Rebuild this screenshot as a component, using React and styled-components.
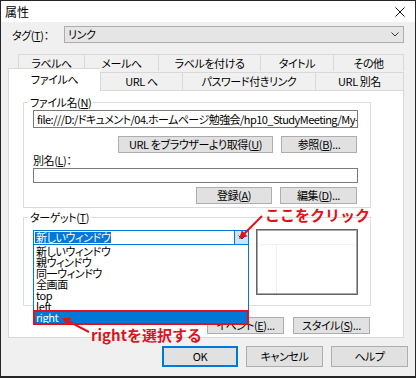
import React from "react";
import styled, { createGlobalStyle } from "styled-components";

const RED = "#e0121b";
const BLUE = "#0078d7";

const backTabs = [
  { label: "ラベルへ", w: 66 },
  { label: "メールへ", w: 74 },
  { label: "ラベルを付ける", w: 102 },
  { label: "タイトル", w: 73 },
  { label: "その他", w: 71 },
];

const frontTabs = [
  { label: "ファイルへ", w: 92, active: true },
  { label: "URL へ", w: 82 },
  { label: "パスワード付きリンク", w: 133 },
  { label: "URL 別名", w: 89 },
];

const targets = ["新しいウィンドウ", "親ウィンドウ", "同一ウィンドウ", "全画面", "top", "left", "right"];

function Chevron() {
  return (
    <svg width="8" height="5" viewBox="0 0 8 5">
      <polyline points="0.5,0.5 4,4 7.5,0.5" fill="none" stroke="#333" strokeWidth="1" />
    </svg>
  );
}

function App() {
  return (
    <>
      <GlobalStyle />
      <Window>
        <TitleBar>
          <span>属性</span>
          <svg width="10" height="10" viewBox="0 0 10 10">
            <path d="M0.5 0.5 L9.5 9.5 M9.5 0.5 L0.5 9.5" stroke="#111" strokeWidth="1" />
          </svg>
        </TitleBar>

        <Body>
          <TagRow>
            <FieldLabel $w={52}>
              タグ(<u>T</u>)：
            </FieldLabel>
            <Combo>
              <span>リンク</span>
              <Chevron />
            </Combo>
          </TagRow>

          <Tabs>
            <BackRow>
              {backTabs.map((t) => (
                <Tab key={t.label} $w={t.w}>
                  {t.label}
                </Tab>
              ))}
            </BackRow>
            <FrontRow>
              {frontTabs.map((t) => (
                <Tab key={t.label} $w={t.w} $active={t.active} $front>
                  {t.label}
                </Tab>
              ))}
            </FrontRow>

            <Panel>
              <Group>
                <Legend>
                  ファイル名(<u>N</u>)
                </Legend>
                <TextBox $h={18} $tight>
                  file:///D:/ドキュメント/04.ホームページ勉強会/hp10_StudyMeeting/My-Homepage/index.html
                </TextBox>
                <ButtonRow $top={8}>
                  <Button $w={155}>
                    URL をブラウザーより取得(<u>U</u>)
                  </Button>
                  <Button $w={76}>
                    参照(<u>B</u>)...
                  </Button>
                </ButtonRow>
                <FieldLabel>
                  別名(<u>L</u>)：
                </FieldLabel>
                <TextBox $h={15} $top={1} />
                <ButtonRow $top={4}>
                  <Button $w={76}>
                    登録(<u>A</u>)
                  </Button>
                  <Button $w={77}>
                    編集(<u>D</u>)...
                  </Button>
                </ButtonRow>
              </Group>

              <Group $top={2} $bottom={10}>
                <Legend>
                  ターゲット(<u>T</u>)
                </Legend>
                <TargetGrid>
                  <ComboWrap>
                    <FocusCombo>
                      <Selected>新しいウィンドウ</Selected>
                      <DropButton>
                        <Chevron />
                      </DropButton>
                    </FocusCombo>
                    <DropList>
                      {targets.map((t) => (
                        <DropItem key={t} $hl={t === "right"}>
                          {t}
                        </DropItem>
                      ))}
                    </DropList>
                  </ComboWrap>
                  <ListBox>
                    <ListHead />
                    <ListCol />
                  </ListBox>
                </TargetGrid>
              </Group>

              <ButtonRow $top={11} $gap={9} $right={1}>
                <Button $w={77}>
                  イベント(<u>E</u>)...
                </Button>
                <Button $w={77}>
                  スタイル(<u>S</u>)...
                </Button>
              </ButtonRow>
            </Panel>
          </Tabs>

          <Footer>
            <Button $w={76} $h={21} $default>
              OK
            </Button>
            <Button $w={77} $h={21}>
              キャンセル
            </Button>
            <Button $w={77} $h={21}>
              ヘルプ
            </Button>
          </Footer>
        </Body>

        <Overlay>
          <Note style={{ left: 265, top: 206 }}>ここをクリック</Note>
          <Note style={{ left: 91, top: 326 }}>rightを選択する</Note>
          <svg width="416" height="378" viewBox="0 0 416 378">
            <line x1="262" y1="216" x2="244.5" y2="233.5" stroke={RED} strokeWidth="2" />
            <polygon points="239,239 247.5,236.2 241.8,230.5" fill={RED} />
            <line x1="89" y1="332" x2="69" y2="321.7" stroke={RED} strokeWidth="2" />
            <polygon points="62,318 70.9,318.1 67.3,325.2" fill={RED} />
          </svg>
        </Overlay>
      </Window>
    </>
  );
}

const GlobalStyle = createGlobalStyle`
  * {
    box-sizing: border-box;
  }
  html, body {
    margin: 0;
    padding: 0;
    background: #f0f0f0;
  }
  body {
    font-family: "Noto Sans CJK JP", "Noto Sans", sans-serif;
    font-size: 11px;
    letter-spacing: -0.4px;
    font-feature-settings: "palt";
    color: #000;
  }
  u {
    text-decoration-thickness: 1px;
    text-underline-offset: 1px;
  }
`;

const Window = styled.div`
  position: relative;
  width: 416px;
  height: 378px;
  border: 1px solid #262626;
  border-bottom-width: 2px;
  background: #f0f0f0;
  display: flex;
  flex-direction: column;
  overflow: hidden;
`;

const TitleBar = styled.div`
  height: 21px;
  background: #fff;
  display: flex;
  align-items: center;
  justify-content: space-between;
  padding: 0 10px 0 4px;
  font-size: 12px;
  letter-spacing: 0;
`;

const Body = styled.div`
  display: flex;
  flex-direction: column;
  padding: 0 11px 0 7px;
`;

const TagRow = styled.div`
  display: flex;
  align-items: center;
  height: 17px;
  margin-top: 4px;
  padding-left: 4px;
`;

const FieldLabel = styled.div`
  width: ${({ $w }) => ($w ? `${$w}px` : "auto")};
  line-height: 14px;
  white-space: nowrap;
`;

const Combo = styled.div`
  flex: 1;
  height: 17px;
  border: 1px solid #adadad;
  background: #e5e5e5;
  display: flex;
  align-items: center;
  justify-content: space-between;
  padding: 0 4px 0 3px;
  line-height: 15px;
`;

const Tabs = styled.div`
  display: flex;
  flex-direction: column;
  margin-top: 11px;
`;

const BackRow = styled.div`
  display: flex;
  height: 17px;
  padding-left: 10px;
`;

const FrontRow = styled.div`
  display: flex;
  height: 19px;
  position: relative;
  z-index: 1;
`;

const Tab = styled.div`
  width: ${({ $w }) => $w}px;
  height: ${({ $front, $active }) => ($active ? 23 : $front ? 18 : 17)}px;
  margin-top: ${({ $front, $active }) => ($active ? -3 : $front ? 1 : 0)}px;
  background: ${({ $active }) => ($active ? "#fff" : "#f0f0f0")};
  border: 1px solid #d9d9d9;
  border-bottom: none;
  border-right: none;
  text-align: center;
  line-height: ${({ $active }) => ($active ? 20 : 16)}px;
  white-space: nowrap;

  &:last-child {
    border-right: 1px solid #d9d9d9;
  }
`;

const Panel = styled.div`
  height: 248px;
  background: #fff;
  border: 1px solid #d9d9d9;
  display: flex;
  flex-direction: column;
  padding: 4px 0 0 14px;
`;

const Group = styled.fieldset`
  width: 348px;
  margin: ${({ $top }) => $top || 0}px 0 0 0;
  border: 1px solid #dcdcdc;
  padding: 1px 12px ${({ $bottom }) => $bottom ?? 3}px 9px;
  min-width: 0;
`;

const Legend = styled.legend`
  padding: 0 2px;
  margin-left: -5px;
  line-height: 14px;
`;

const TextBox = styled.div`
  height: ${({ $h }) => $h}px;
  margin-top: ${({ $top }) => $top || 0}px;
  border: 1px solid #7a7a7a;
  background: #fff;
  padding: 0 3px;
  line-height: ${({ $h }) => $h - 2}px;
  letter-spacing: ${({ $tight }) => ($tight ? "-0.55px" : "inherit")};
  white-space: nowrap;
  overflow: hidden;
`;

const ButtonRow = styled.div`
  display: flex;
  justify-content: flex-end;
  gap: ${({ $gap }) => $gap || 8}px;
  margin-top: ${({ $top }) => $top}px;
  width: 348px;
  padding-right: ${({ $right }) => $right || 1}px;

  fieldset & {
    width: auto;
  }
`;

const Button = styled.div`
  width: ${({ $w }) => $w}px;
  height: ${({ $h }) => $h || 17}px;
  border: 1px solid ${({ $default }) => ($default ? BLUE : "#adadad")};
  box-shadow: ${({ $default }) => ($default ? `inset 0 0 0 1px ${BLUE}` : "none")};
  background: #e1e1e1;
  text-align: center;
  line-height: ${({ $h }) => ($h || 17) - 2}px;
  white-space: nowrap;
`;

const TargetGrid = styled.div`
  display: grid;
  grid-template-columns: 216px 102px;
  column-gap: 7px;
  align-items: start;
  margin-top: 5px;
`;

const ComboWrap = styled.div`
  position: relative;
  z-index: 2;
`;

const FocusCombo = styled.div`
  height: 15px;
  border: 1px solid ${BLUE};
  background: #fff;
  display: flex;
  align-items: center;
  justify-content: space-between;
  padding-left: 1px;
`;

const Selected = styled.span`
  background: ${BLUE};
  color: #fff;
  line-height: 11px;
  padding: 0 1px;
`;

const DropButton = styled.div`
  width: 14px;
  height: 13px;
  background: #cce4f7;
  border-left: 1px solid ${BLUE};
  display: flex;
  align-items: center;
  justify-content: center;
`;

const DropList = styled.div`
  position: absolute;
  left: 0;
  top: calc(100% - 1px);
  width: 216px;
  border: 1px solid ${BLUE};
  background: #fff;
  padding: 1px 0 1px;
`;

const DropItem = styled.div`
  height: 11px;
  line-height: 11px;
  padding-left: 1px;
  margin: 0 1px;
  white-space: nowrap;
  background: ${({ $hl }) => ($hl ? BLUE : "transparent")};
  color: ${({ $hl }) => ($hl ? "#fff" : "#000")};
  outline: ${({ $hl }) => ($hl ? `2px solid ${RED}` : "none")};
`;

const ListBox = styled.div`
  position: relative;
  height: 66px;
  margin-top: -1px;
  border: 1px solid #646464;
  box-shadow: inset 0 0 0 1px #a8a8a8;
  background: #fff;
`;

const ListHead = styled.div`
  height: 15px;
  border-bottom: 1px solid #efefef;
  margin: 0 2px;
`;

const ListCol = styled.div`
  width: 20px;
  height: 48px;
  border-right: 1px solid #efefef;
`;

const Footer = styled.div`
  display: flex;
  justify-content: flex-end;
  gap: 8px;
  margin-top: 8px;
  margin-right: -4px;
`;

const Overlay = styled.div`
  position: absolute;
  top: -1px;
  left: -1px;
  width: 416px;
  height: 378px;
  pointer-events: none;
  z-index: 5;

  svg {
    position: absolute;
    left: 0;
    top: 0;
  }
`;

const Note = styled.div`
  position: absolute;
  color: ${RED};
  font-size: 15px;
  font-weight: 700;
  line-height: 17px;
  letter-spacing: 0;
  font-feature-settings: normal;
  white-space: nowrap;
`;

export default App;
